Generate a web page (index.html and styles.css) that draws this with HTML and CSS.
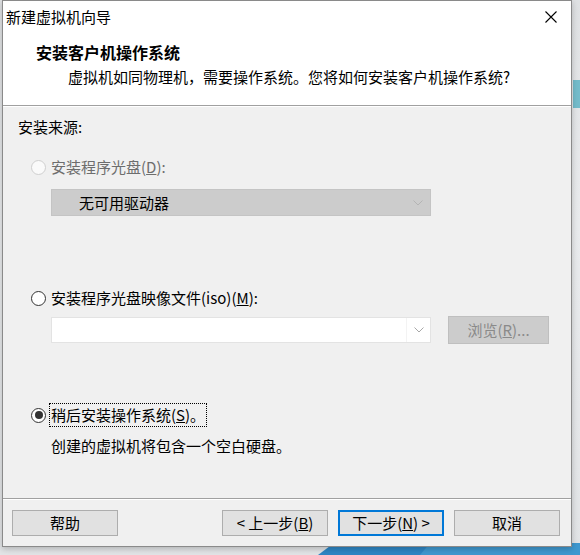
FILE: index.html
```html
<!DOCTYPE html>
<html lang="zh-CN">
<head>
<meta charset="utf-8">
<title>新建虚拟机向导</title>
<link rel="stylesheet" href="styles.css">
</head>
<body>
<div class="desktop">
  <div class="wall-accent"></div>
  <svg class="wall-wave" width="580" height="12" viewBox="0 0 580 12">
    <polygon points="318,12 334,0 580,0 580,12" fill="#2e86c4"/>
    <polygon points="420,12 430,0 580,0 580,12" fill="#3f98cf"/>
  </svg>
  <div class="window">
    <div class="titlebar">
      <span class="title">新建虚拟机向导</span>
      <svg class="close" width="12" height="12" viewBox="0 0 12 12">
        <path d="M0.5 0.5 L11.5 11.5 M11.5 0.5 L0.5 11.5" stroke="#000" stroke-width="1.1" fill="none"/>
      </svg>
    </div>
    <div class="header">
      <div class="h-title">安装客户机操作系统</div>
      <div class="h-sub">虚拟机如同物理机，需要操作系统。您将如何安装客户机操作系统?</div>
    </div>
    <div class="rule"></div>
    <div class="content">
      <div class="section-label">安装来源:</div>
      <div class="radio-row row-disc disabled">
        <span class="radio"></span>
        <span class="label">安装程序光盘(<u>D</u>):</span>
      </div>
      <div class="combo combo-disabled">
        <span class="combo-text">无可用驱动器</span>
        <span class="combo-arrow">
          <svg width="10" height="6" viewBox="0 0 10 6"><path d="M0.5 0.5 L5 5 L9.5 0.5" stroke="#b4b4b4" fill="none"/></svg>
        </span>
      </div>
      <div class="radio-row row-iso">
        <span class="radio"></span>
        <span class="label">安装程序光盘映像文件(iso)(<u>M</u>):</span>
      </div>
      <div class="iso-row">
        <div class="combo combo-iso">
          <span class="combo-text"></span>
          <span class="combo-arrow arrow-split">
            <svg width="10" height="6" viewBox="0 0 10 6"><path d="M0.5 0.5 L5 5 L9.5 0.5" stroke="#a8a8a8" fill="none"/></svg>
          </span>
        </div>
        <span class="btn btn-disabled browse">浏览(<u>R</u>)...</span>
      </div>
      <div class="radio-row row-later">
        <span class="radio checked"></span>
        <span class="label focus">稍后安装操作系统(<u>S</u>)。</span>
      </div>
      <div class="desc">创建的虚拟机将包含一个空白硬盘。</div>
    </div>
    <div class="rule"></div>
    <div class="footer">
      <span class="btn">帮助</span>
      <span class="spacer"></span>
      <span class="btn">&lt; 上一步(<u>B</u>)</span>
      <span class="btn btn-default">下一步(<u>N</u>) &gt;</span>
      <span class="btn">取消</span>
    </div>
  </div>
</div>
</body>
</html>
```

FILE: styles.css
```css
* {
  box-sizing: border-box;
}

body {
  margin: 0;
  font-family: "Noto Sans CJK SC", "Microsoft YaHei", sans-serif;
  font-size: 15px;
  color: #000;
}

.desktop {
  position: relative;
  width: 580px;
  height: 555px;
  overflow: hidden;
  background: linear-gradient(180deg, #dfe1e3 0%, #e9ebed 40%, #e2e4e6 100%);
}

.wall-accent {
  position: absolute;
  left: 573px;
  top: 80px;
  width: 7px;
  height: 28px;
  background: #74bccb;
}

.wall-wave {
  position: absolute;
  left: 0;
  top: 543px;
}

.window {
  position: relative;
  margin-left: 2px;
  width: 570px;
  height: 547px;
  border: 1px solid #8a8a8a;
  background: #f0f0f0;
  display: flex;
  flex-direction: column;
  box-shadow: 0 2px 6px rgba(0, 0, 0, 0.22);
}

.titlebar {
  height: 32px;
  flex: none;
  background: #fff;
  display: flex;
  align-items: center;
  justify-content: space-between;
  padding: 0 14px 0 3px;
  line-height: 20px;
}

.close {
  display: block;
}

.header {
  height: 72px;
  flex: none;
  background: #fff;
  padding-top: 8px;
}

.h-title {
  font-size: 16px;
  font-weight: bold;
  line-height: 22px;
  padding-left: 33px;
}

.h-sub {
  margin-top: 4px;
  line-height: 20px;
  padding-left: 65px;
}

.rule {
  flex: none;
  height: 2px;
  border-top: 1px solid #a0a0a0;
  border-bottom: 1px solid #fff;
}

.content {
  height: 391px;
  flex: none;
  padding: 10px 0 0 15px;
  background: #f0f0f0;
}

.section-label {
  line-height: 20px;
}

.radio-row {
  display: flex;
  align-items: center;
  height: 24px;
}

.row-disc {
  margin-top: 18px;
}

.row-iso {
  margin-top: 70px;
}

.row-later {
  margin-top: 59px;
}

.radio {
  width: 15px;
  height: 15px;
  margin-left: 13px;
  border: 1px solid #333;
  border-radius: 50%;
  background: #fff;
  display: flex;
  align-items: center;
  justify-content: center;
  flex: none;
}

.radio.checked::after {
  content: "";
  width: 8px;
  height: 8px;
  border-radius: 50%;
  background: #333;
}

.disabled .radio {
  border-color: #cfcfcf;
  background: #fafafa;
}

.disabled .label {
  color: #6d6d6d;
}

.label {
  margin-left: 3px;
  line-height: 20px;
  padding: 1px;
  border: 1px dotted transparent;
}

.label.focus {
  border-color: #000;
}

.combo {
  width: 380px;
  margin-left: 33px;
  display: flex;
  align-items: center;
}

.combo-text {
  flex: 1;
  line-height: 20px;
}

.combo-arrow {
  width: 24px;
  align-self: stretch;
  display: flex;
  align-items: center;
  justify-content: center;
}

.combo-arrow svg {
  display: block;
}

.combo-disabled {
  margin-top: 10px;
  height: 27px;
  background: #cccccc;
  border: 1px solid #c4c4c4;
}

.combo-disabled .combo-text {
  padding-left: 27px;
}

.iso-row {
  margin-top: 6px;
  display: flex;
  align-items: center;
  height: 28px;
}

.combo-iso {
  height: 26px;
  background: #fff;
  border: 1px solid #e3e3e3;
}

.arrow-split {
  border-left: 1px solid #f3f3f3;
}

.btn {
  display: flex;
  align-items: center;
  justify-content: center;
  width: 106px;
  height: 26px;
  background: #e1e1e1;
  border: 1px solid #adadad;
  line-height: 20px;
  flex: none;
}

.browse {
  margin-left: 17px;
  width: 101px;
  height: 28px;
}

.btn-disabled {
  background: #cccccc;
  border-color: #bfbfbf;
  color: #8a8a8a;
}

.btn-default {
  border: 2px solid #0078d7;
}

.desc {
  margin-top: 9px;
  margin-left: 33px;
  line-height: 20px;
}

.footer {
  flex: 1;
  display: flex;
  align-items: flex-start;
  gap: 10px;
  padding: 10px 11px 0 9px;
  background: #f0f0f0;
}

.spacer {
  flex: 1;
}
```
